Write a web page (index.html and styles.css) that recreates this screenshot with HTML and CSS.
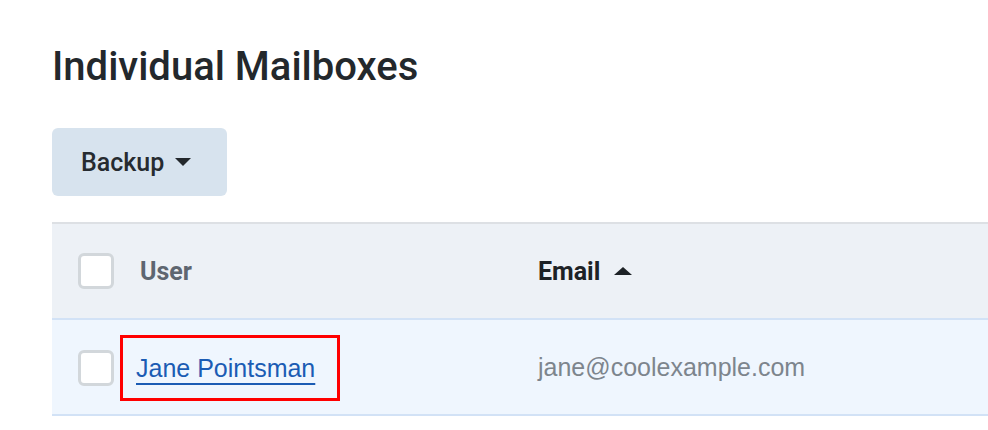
FILE: index.html
```html
<!DOCTYPE html>
<html lang="en">
<head>
<meta charset="utf-8">
<title>Individual Mailboxes</title>
<link rel="stylesheet" href="styles.css">
</head>
<body>
<main class="page">
  <h1 class="title">Individual Mailboxes</h1>
  <div class="toolbar">
    <button class="btn-backup" type="button">Backup <span class="caret-down"></span></button>
  </div>
  <div class="table">
    <div class="row head">
      <div class="cell check"><span class="checkbox"></span></div>
      <div class="cell user-h">User</div>
      <div class="cell email-h">Email <span class="caret-up"></span></div>
    </div>
    <div class="row body-row">
      <div class="cell check"><span class="checkbox lower"></span></div>
      <div class="cell name"><span class="highlight"><a class="user-link" href="#">Jane Pointsman</a></span></div>
      <div class="cell email">jane@coolexample.com</div>
    </div>
  </div>
</main>
</body>
</html>
```

FILE: styles.css
```css
* { box-sizing: border-box; }
html, body { margin: 0; padding: 0; background: #ffffff; }
body { font-family: Roboto, "Liberation Sans", sans-serif; color: #22272b; }
.page { padding: 43px 0 0 52px; }
.title {
  margin: 0;
  font-family: Roboto, sans-serif;
  font-weight: 500;
  font-size: 40px;
  line-height: 48px;
  color: #23282c;
}
.toolbar { margin-top: 37px; }
.btn-backup {
  display: inline-flex;
  align-items: center;
  gap: 11px;
  height: 68px;
  padding: 0 36px 0 29px;
  border: 0;
  border-radius: 6px;
  background: #d7e3ee;
  font-family: Roboto, sans-serif;
  font-weight: 500;
  font-size: 25px;
  color: #262b30;
}
.caret-down {
  width: 0; height: 0;
  border-left: 8px solid transparent;
  border-right: 8px solid transparent;
  border-top: 8px solid #23282c;
}
.caret-up {
  display: inline-block;
  width: 0; height: 0;
  margin-left: 14px;
  border-left: 9px solid transparent;
  border-right: 9px solid transparent;
  border-bottom: 8px solid #1d2226;
}
.table {
  margin-top: 26px;
  border-top: 2px solid #dde0e4;
}
.row {
  display: grid;
  grid-template-columns: 68px 418px 1fr;
  height: 96px;
  border-bottom: 2px solid #d2e2f6;
  align-items: center;
}
.head { background: #edf1f6; }
.body-row { background: #eff6fe; }
.cell { display: flex; align-items: center; }
.check { padding-left: 26px; }
.checkbox {
  display: block;
  width: 36px; height: 36px;
  border: 3px solid #d2d7db;
  border-radius: 6px;
  background: #ffffff;
}
.checkbox.lower { margin-top: 2px; }
.user-h, .email-h {
  font-family: Roboto, sans-serif;
  font-weight: 700;
  font-size: 25px;
}
.user-h { padding-left: 20px; color: #5e6670; }
.email-h { color: #1d2226; }
.highlight {
  display: block;
  margin-top: 2px;
  border: 3px solid #ff0000;
  padding: 15px 22px 15px 13px;
  font-family: "Liberation Sans", Arial, sans-serif;
  font-size: 25px;
  line-height: 30px;
}
.user-link {
  font-family: "Liberation Sans", Arial, sans-serif;
  font-size: 25px;
  color: #1b5cb4;
  text-decoration: underline;
  text-decoration-thickness: 2px;
  text-underline-offset: 6px;
}
.email {
  font-family: "Liberation Sans", Arial, sans-serif;
  font-size: 25px;
  color: #7d858d;
}
```
